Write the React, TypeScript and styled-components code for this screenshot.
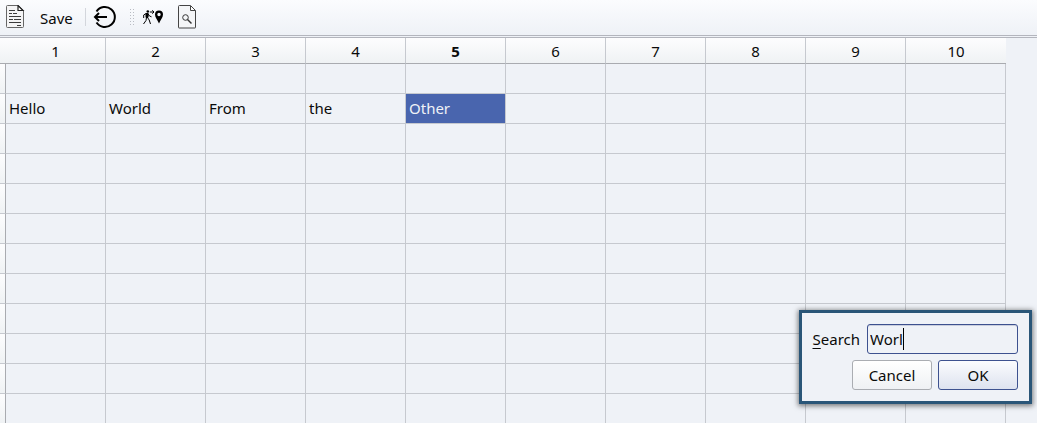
import React, { useState } from "react";
import styled, { createGlobalStyle, css } from "styled-components";

const GlobalStyle = createGlobalStyle`
  *, *::before, *::after { box-sizing: border-box; }
  body {
    margin: 0;
    background: #eff2f7;
    color: #0a0a0a;
    font: 15px/20px "Noto Sans", sans-serif;
  }
  button, input { font: inherit; color: inherit; }
`;

const Window = styled.div`
  position: relative;
  display: flex;
  flex-direction: column;
  height: 100vh;
  overflow: hidden;
`;

const Toolbar = styled.header`
  display: flex;
  flex: none;
  align-items: center;
  height: 38px;
  padding: 0 5px 3px;
  background: linear-gradient(#fbfcfe, #eff2f7 34px);
  border-bottom: 1px solid #b3b5bd;
  box-shadow: inset 0 -1px #eff2f7, inset 0 -2px #b3b5bd;
`;

const ToolButton = styled.button`
  display: flex;
  align-items: center;
  padding: 0;
  border: 0;
  background: none;

  svg { display: block; }
`;

const SaveButton = styled(ToolButton)`
  height: 24px;
  margin: 2px 12px 0 15px;
`;

const Separator = styled.span`
  width: 1px;
  height: 18px;
  margin-right: 7px;
  background: #d3d6dc;
`;

const Grip = styled.span`
  width: 5px;
  height: 17px;
  margin: 0 7px 0 13px;
  background: conic-gradient(from 270deg at 1px 1px, #b9bcc3 90deg, transparent 90deg) 0 0 / 3px 3px;
`;

const SearchButton = styled(ToolButton)`
  margin-left: 14px;
`;

const SheetPane = styled.main`
  flex: 1;
  min-height: 0;
  overflow: hidden;
`;

const Sheet = styled.table`
  width: 1006px;
  table-layout: fixed;
  border-collapse: separate;
  border-spacing: 0;
`;

const RowHeadColumn = styled.col`
  width: 6px;
`;

const ColumnHead = styled.th<{ $current?: boolean }>`
  height: 26px;
  padding: 0;
  font-weight: ${(p) => (p.$current ? 700 : 400)};
  text-align: center;
  background: linear-gradient(#fdfdfe, #eff2f4);
  border-right: 1px solid #c6c9cf;
  border-bottom: 1px solid #a9abb0;

  &:last-child { border-right: 0; }
`;

const Corner = styled.td`
  padding: 0;
  background: linear-gradient(#fdfdfe, #eff2f4);
  border-bottom: 1px solid #a9abb0;
`;

const RowHead = styled.th`
  height: 30px;
  padding: 0;
  background: linear-gradient(#fdfdfe, #eff2f4);
  border-right: 1px solid #a9abb0;
  border-bottom: 1px solid #c6c9cf;
`;

const Cell = styled.td<{ $selected?: boolean }>`
  height: 30px;
  padding: 0 3px 2px;
  border-right: 1px solid #c6c9cf;
  border-bottom: 1px solid #c6c9cf;
  ${(p) =>
    p.$selected &&
    css`
      color: #eff2f7;
      background: #4965ae padding-box;
    `}
`;

const SearchDialog = styled.form`
  position: absolute;
  right: 5px;
  bottom: 19px;
  display: flex;
  flex-direction: column;
  gap: 6px;
  padding: 11px;
  background: #eff2f7;
  border: 3px solid #2a5678;
  box-shadow: 0 1px 5px 1px rgba(0, 0, 0, 0.5);
`;

const Field = styled.div`
  display: flex;
  align-items: center;
  gap: 7px;
`;

const Mnemonic = styled.span`
  text-decoration: underline;
  text-decoration-thickness: 1px;
  text-underline-offset: 3px;
`;

const InputFrame = styled.div`
  position: relative;
  width: 151px;
`;

const SearchInput = styled.input`
  display: block;
  width: 100%;
  height: 30px;
  padding: 0 2px;
  background: #eff2f7;
  border: 1px solid #3d518f;
  border-radius: 3px;
  box-shadow: inset 0 1px #c9cedd;
  outline: none;
  caret-color: transparent;
`;

const Caret = styled.span`
  position: absolute;
  top: 4px;
  left: 36px;
  width: 1px;
  height: 22px;
  background: #000;
`;

const Actions = styled.div`
  display: flex;
  justify-content: flex-end;
  gap: 6px;
`;

const DialogButton = styled.button<{ $primary?: boolean }>`
  width: 80px;
  height: 30px;
  padding: 0;
  border: 1px solid ${(p) => (p.$primary ? "#3d518f" : "#aaadb2")};
  border-radius: 3px;
  background: ${(p) =>
    p.$primary
      ? "linear-gradient(#fbfcfe, #dde2ef)"
      : "linear-gradient(#ffffff, #eff1f4)"};
`;

const DocumentIcon = () => (
  <svg width="20" height="24" viewBox="0 0 20 24" fill="none" stroke="#3c3c3c">
    <path d="M3 .5h10.500l5 5V21.500q0 1-1 1H2.500q-1 0-1-1V1.500q0-1 1-1Z" fill="#f4f4f5" stroke="#666" />
    <path d="M13 .5V5.500h5Z" fill="#fff" stroke="#222" strokeWidth="1.200" />
    <path d="M4 5.500h6M4 8.500h3M8 8.500h4M4 11.500h12M4 14.500h4M9 14.500h7M4 17.500h12M12 20.500h4" />
  </svg>
);

const ExitIcon = () => (
  <svg width="24" height="24" viewBox="0 0 24 24" fill="none" stroke="#000" strokeWidth="2">
    <path d="M3.500 6.500A10 10 0 1 1 3.500 17.500" />
    <path d="M14 12H2M6 8l-4 4 4 4" />
  </svg>
);

const GoToIcon = () => (
  <svg width="22" height="16" viewBox="0 0 22 16" fill="none" stroke="#000" strokeWidth="1">
    <circle cx="5.800" cy="2.500" r="1.300" fill="#000" stroke="none" />
    <path d="M4 4.500h2.200L6 8.500H4Z" fill="#000" />
    <path d="M4 4.500L1.700 6v3M6.200 5l1.300 2 2 .8M4.500 8.500L4 11.500 1.500 15M5.500 8.500l1.700 2.500L8.500 15" />
    <path d="M7.800 3h4M10.300 1.300L12 3 10.300 4.700" />
    <path fillRule="evenodd" d="M17 1.500a4 4 0 0 1 4 4C21 8.500 18.500 11 17 14.500c-1.500-3.500-4-6-4-9A4 4 0 0 1 17 1.500Zm0 2.300a1.700 1.700 0 1 0 0 3.400 1.700 1.700 0 0 0 0-3.400Z" fill="#000" stroke="none" />
  </svg>
);

const FindIcon = () => (
  <svg width="18" height="24" viewBox="0 0 18 24" fill="none" stroke="#444">
    <path d="M1.500.5h10.500l5.500 5.500V22.500q0 .5-.5 .5H1q-.5 0-.5-.5V1.500Q.5.5 1.500.5Z" fill="#f4f5f7" />
    <path d="M12.500.5V5.500h5Z" fill="#fff" />
    <circle cx="7.500" cy="12.500" r="2.800" stroke="#333" />
    <path d="M9.500 14.500l4 4" stroke="#333" strokeWidth="1.500" />
  </svg>
);

const columns = Array.from({ length: 10 }, (_, i) => i + 1);
const rows: string[][] = Array.from({ length: 12 }, () => []);
rows[1] = ["Hello", "World", "From", "the", "Other"];
const selected = { row: 1, column: 5 };

export default function App() {
  const [query, setQuery] = useState("Worl");

  return (
    <Window>
      <GlobalStyle />
      <Toolbar>
        <ToolButton type="button" aria-label="Document"><DocumentIcon /></ToolButton>
        <SaveButton type="button">Save</SaveButton>
        <Separator />
        <ToolButton type="button" aria-label="Exit"><ExitIcon /></ToolButton>
        <Grip />
        <ToolButton type="button" aria-label="Go to cell"><GoToIcon /></ToolButton>
        <SearchButton type="button" aria-label="Search"><FindIcon /></SearchButton>
      </Toolbar>
      <SheetPane>
        <Sheet>
          <colgroup>
            <RowHeadColumn />
            {columns.map((c) => <col key={c} />)}
          </colgroup>
          <thead>
            <tr>
              <Corner />
              {columns.map((c) => (
                <ColumnHead key={c} scope="col" $current={c === selected.column}>{c}</ColumnHead>
              ))}
            </tr>
          </thead>
          <tbody>
            {rows.map((row, r) => (
              <tr key={r}>
                <RowHead scope="row" aria-label={`Row ${r + 1}`} />
                {columns.map((c) => (
                  <Cell key={c} $selected={r === selected.row && c === selected.column}>{row[c - 1]}</Cell>
                ))}
              </tr>
            ))}
          </tbody>
        </Sheet>
      </SheetPane>
      <SearchDialog role="dialog" aria-label="Search" onSubmit={(e) => e.preventDefault()}>
        <Field>
          <label htmlFor="query"><Mnemonic>S</Mnemonic>earch</label>
          <InputFrame>
            <SearchInput id="query" type="text" value={query} onChange={(e) => setQuery(e.target.value)} />
            {query === "Worl" && <Caret />}
          </InputFrame>
        </Field>
        <Actions>
          <DialogButton type="button">Cancel</DialogButton>
          <DialogButton type="submit" $primary>OK</DialogButton>
        </Actions>
      </SearchDialog>
    </Window>
  );
}
